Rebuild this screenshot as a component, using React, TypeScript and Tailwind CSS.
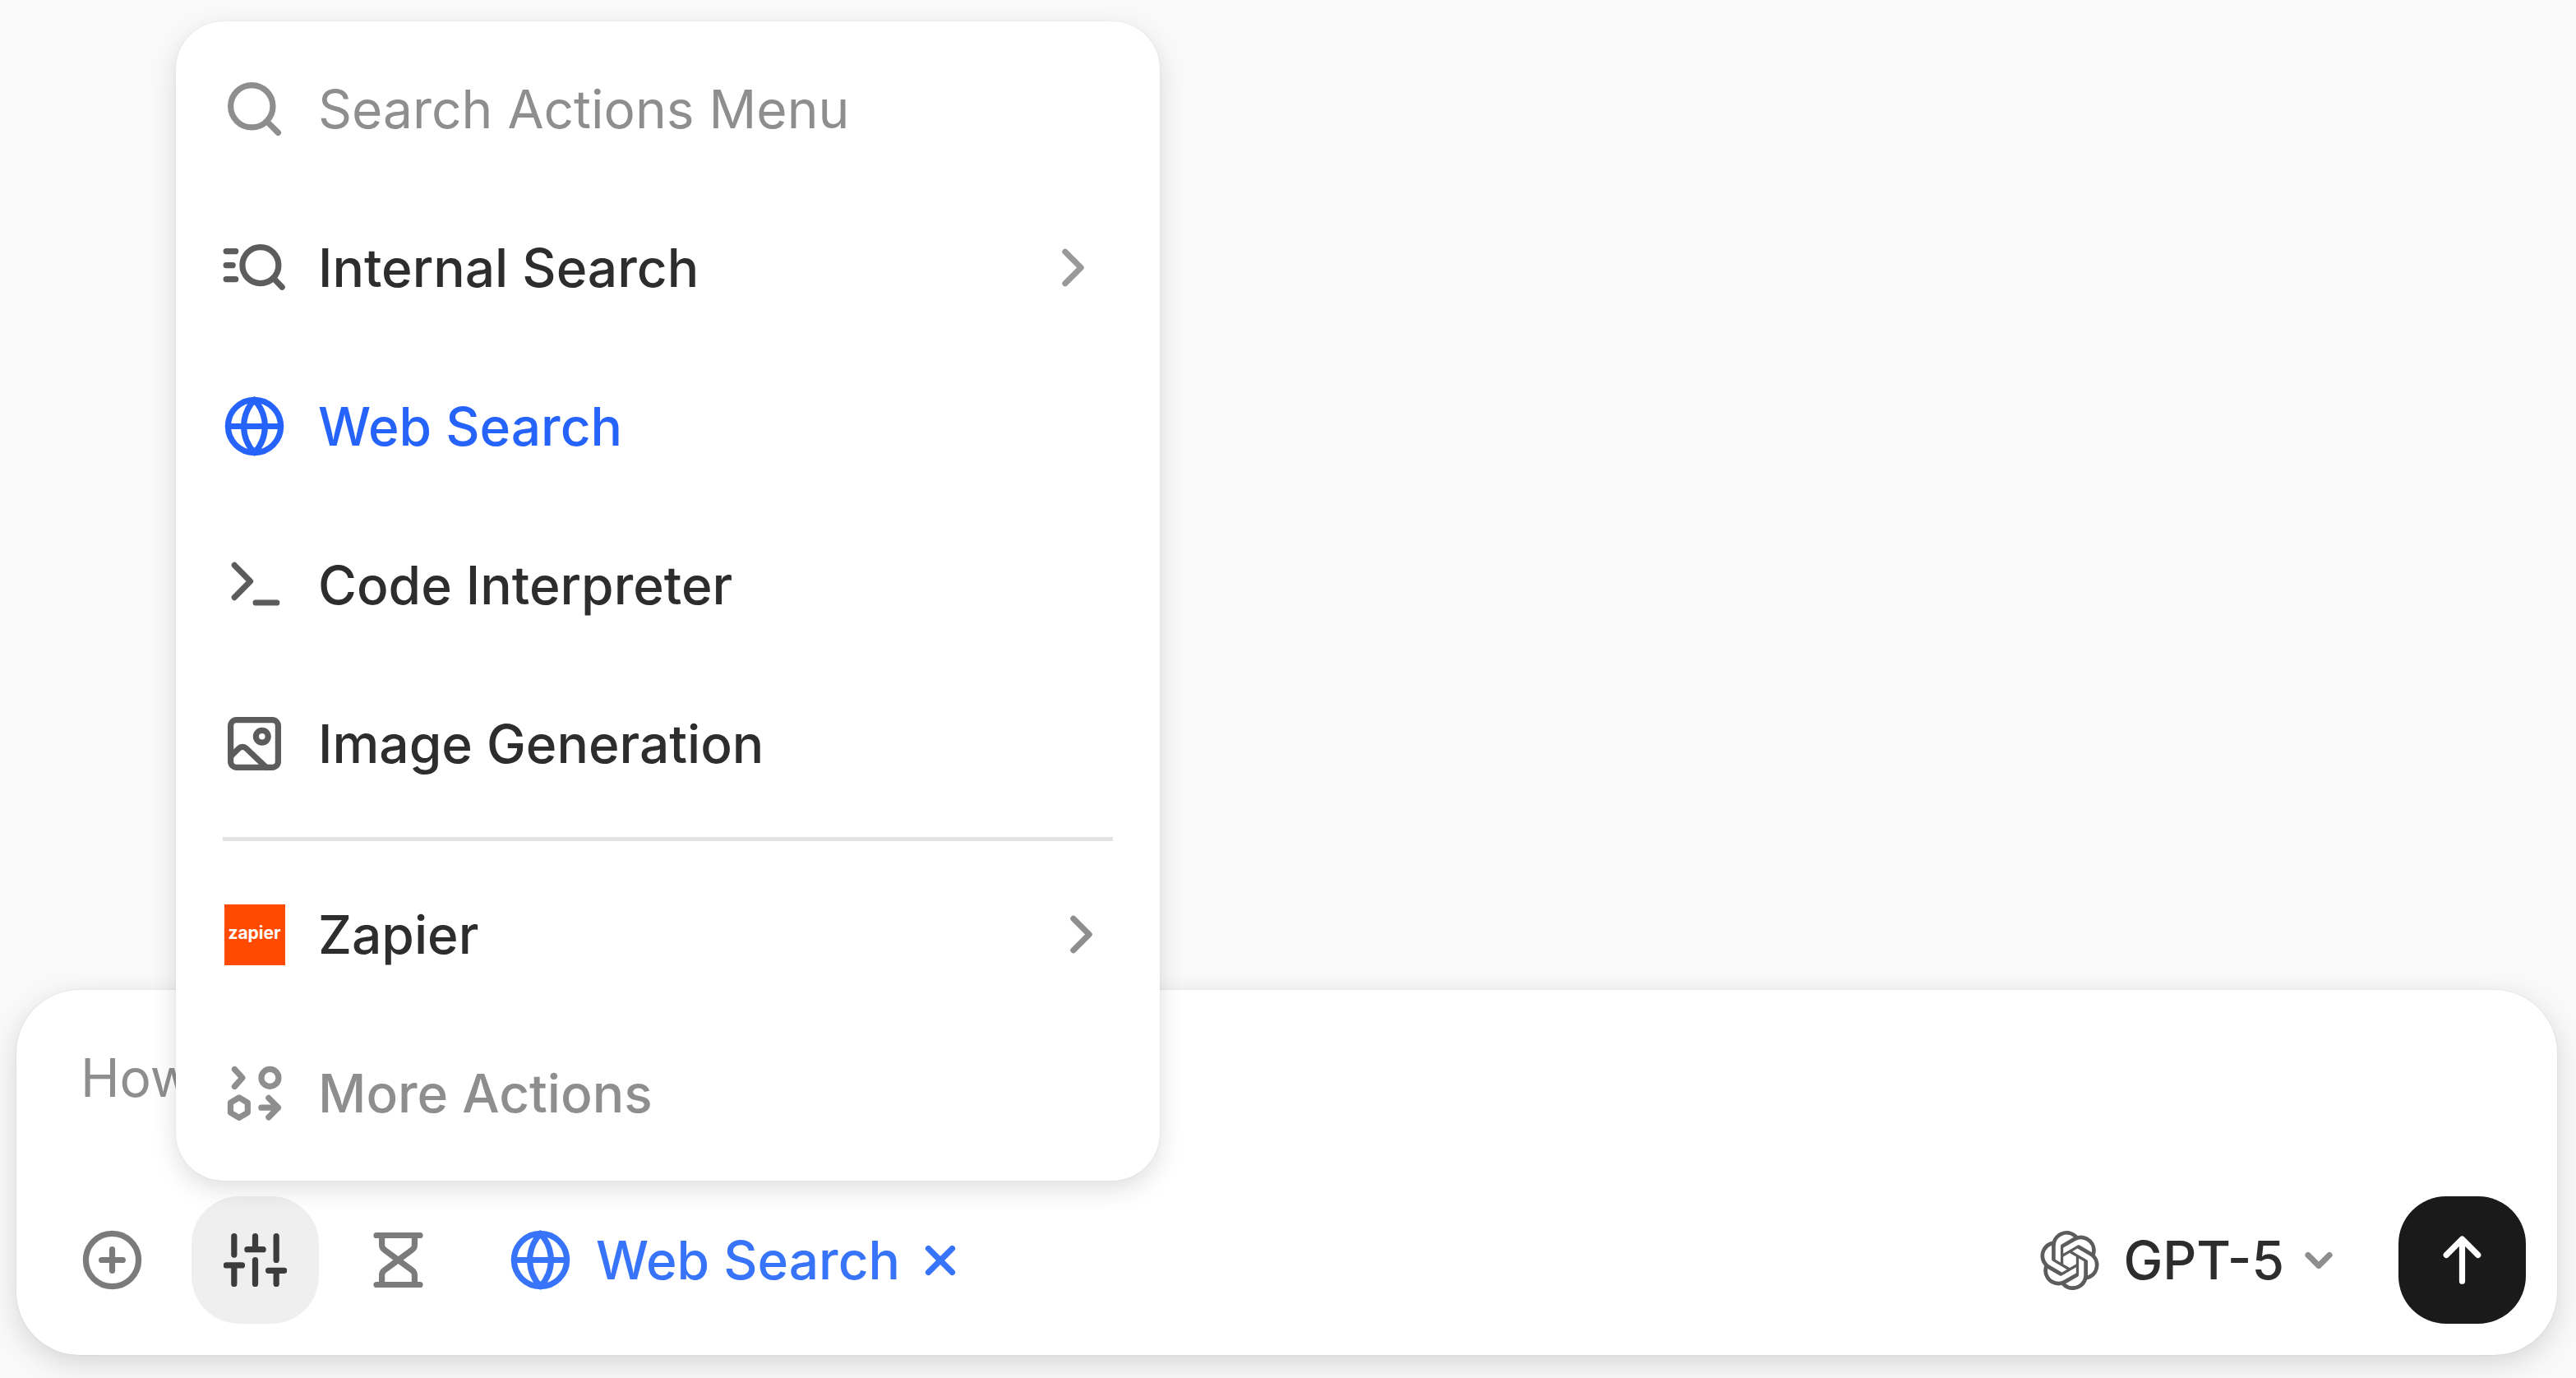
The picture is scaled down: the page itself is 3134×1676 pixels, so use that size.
import React from "react";
import { ChevronDown, ChevronRight, CirclePlus, Globe, Search, X } from "lucide-react";
import { SiOpenai } from "react-icons/si";

type IconProps = { className?: string };

const ICON = "size-[77px] shrink-0";

function Stroke({ className, children }: IconProps & { children: React.ReactNode }) {
  return (
    <svg
      viewBox="0 0 24 24"
      fill="none"
      stroke="currentColor"
      strokeWidth={2.25}
      strokeLinecap="round"
      strokeLinejoin="round"
      aria-hidden="true"
      className={`size-[77px] shrink-0 ${className ?? ""}`}
    >
      {children}
    </svg>
  );
}

function MenuSearchIcon({ className }: IconProps) {
  return (
    <Stroke className={className}>
      <path d="M1.3 5.8h3.6M1.3 11.1h2.5M1.3 16.4h3.6M19.2 16l3.3 3.4" />
      <circle cx="14.3" cy="11.1" r="6.85" />
    </Stroke>
  );
}

function PromptIcon({ className }: IconProps) {
  return (
    <Stroke className={className}>
      <path d="M4.45 4.5l6 6.1-6 6.1M12.5 18.7h8" />
    </Stroke>
  );
}

function PictureIcon({ className }: IconProps) {
  return (
    <Stroke className={className}>
      <rect x="3" y="3" width="18" height="18" rx="2.2" />
      <circle cx="14.9" cy="9.3" r="2.3" />
      <path d="M3 16.8l3.1-3a2 2 0 0 1 2.8 0L16.5 21" />
    </Stroke>
  );
}

function ActionsIcon({ className }: IconProps) {
  return (
    <Stroke className={className}>
      <path d="M4.5 2.95l2.95 3.25-2.95 3.3" />
      <circle cx="17.9" cy="6.2" r="3.26" />
      <path d="M6.2 13.7l3.25 1.9v3.8l-3.25 1.9-3.25-1.9v-3.8z" />
      <path d="M14.6 17.5h6.4M17.4 13.85l3.6 3.65-3.6 3.65" />
    </Stroke>
  );
}

function SlidersIcon({ className }: IconProps) {
  return (
    <Stroke className={className}>
      <path d="M4 21v-7M4 10V3M12 21v-9M12 8V3M20 21v-5M20 12V3M1 14h6M9 8h6M17 16h6" />
    </Stroke>
  );
}

function HourglassIcon({ className }: IconProps) {
  return (
    <Stroke className={className}>
      <path d="M3.75 2.65h16.5M3.75 21.35h16.5" />
      <path d="M5.8 2.65V6.3c0 .75.37 1.4.97 1.85L12 12l5.23-3.85c.6-.45.97-1.1.97-1.85V2.65" />
      <path d="M5.8 21.35V17.7c0-.75.37-1.4.97-1.85L12 12l5.23 3.85c.6.45.97 1.1.97 1.85v3.65" />
    </Stroke>
  );
}

function SendIcon({ className }: IconProps) {
  return (
    <Stroke className={className}>
      <path d="M12 20V4.2M6 10.1l6-6 6 6" />
    </Stroke>
  );
}

function ZapierLogo() {
  return (
    <span className="flex size-[77px] shrink-0 items-center justify-center">
      <span className="flex size-[74px] items-center justify-center bg-[#ff4a00] pb-1 text-[21px] leading-none font-bold text-white">
        zapier
      </span>
    </span>
  );
}

type ItemProps = {
  icon: React.ReactNode;
  label: string;
  tone?: string;
  trailing?: React.ReactNode;
};

function MenuItem({ icon, label, tone = "text-[#2d2d2d]", trailing }: ItemProps) {
  return (
    <li>
      <button
        type="button"
        className={`flex h-[193px] w-full items-center gap-[39px] text-left text-[64px] leading-[96px] font-[550] whitespace-nowrap ${tone}`}
      >
        {icon}
        <span className="grow">{label}</span>
        {trailing}
      </button>
    </li>
  );
}

function ActionsMenu() {
  return (
    <div className="absolute bottom-full -left-[19px] z-10 mb-[19px] w-[1197px] rounded-[58px] bg-white px-[57px] py-[10px] shadow-[0_10px_30px_rgba(0,0,0,0.13),0_0_2px_rgba(0,0,0,0.08)]">
      <label className="flex h-[193px] items-center gap-[39px] text-[#8e8e8e]">
        <Search className={ICON} strokeWidth={2.25} />
        <input
          type="text"
          aria-label="Search Actions Menu"
          placeholder="Search Actions Menu"
          className="h-24 min-w-0 grow bg-transparent text-[64px] leading-[96px] outline-none placeholder:text-[#8e8e8e]"
        />
      </label>
      <ul>
        <MenuItem
          icon={<MenuSearchIcon className="text-[#5c5c5c]" />}
          label="Internal Search"
          trailing={<ChevronRight className="mr-[10px] size-[77px] shrink-0 text-[#999999]" strokeWidth={2.25} />}
        />
        <MenuItem icon={<Globe className={ICON} strokeWidth={2.25} />} label="Web Search" tone="text-[#2563fb]" />
        <MenuItem icon={<PromptIcon className="text-[#5c5c5c]" />} label="Code Interpreter" />
        <MenuItem icon={<PictureIcon className="text-[#5c5c5c]" />} label="Image Generation" />
      </ul>
      <hr className="my-[17px] h-[5px] border-0 bg-[#e3e3e3]" />
      <ul>
        <MenuItem
          icon={<ZapierLogo />}
          label="Zapier"
          trailing={<ChevronRight className="size-[77px] shrink-0 text-[#8e8e8e]" strokeWidth={2.25} />}
        />
        <MenuItem icon={<ActionsIcon />} label="More Actions" tone="text-[#8e8e8e]" />
      </ul>
    </div>
  );
}

const SQUARE = "flex size-[155px] shrink-0 items-center justify-center rounded-[58px]";

export default function App() {
  return (
    <main className="flex min-h-screen flex-col justify-end bg-[#f9f9f9] pr-[23px] pb-7 pl-5 font-['Inter',sans-serif]">
      <form className="rounded-[77px] bg-white pt-[59px] pr-[38px] pb-[38px] pl-[39px] shadow-[0_10px_34px_rgba(0,0,0,0.14),0_0_2px_rgba(0,0,0,0.1)]">
        <textarea
          aria-label="Message"
          placeholder="How"
          rows={1}
          className="block h-24 w-full resize-none px-[39px] text-[64px] leading-[96px] outline-none placeholder:text-[#8e8e8e]"
        />
        <div className="mt-24 flex items-center gap-[19px]">
          <button type="button" aria-label="Attach" className={`${SQUARE} text-[#7b7b7b]`}>
            <CirclePlus className={ICON} strokeWidth={2.25} />
          </button>
          <div className="relative">
            <button
              type="button"
              aria-label="Actions"
              aria-expanded="true"
              className={`${SQUARE} bg-[#efefef] text-[#3c3c3c]`}
            >
              <SlidersIcon />
            </button>
            <ActionsMenu />
          </div>
          <button type="button" aria-label="Deep research" className={`${SQUARE} text-[#7b7b7b]`}>
            <HourglassIcon />
          </button>
          <button
            type="button"
            className="flex h-[155px] items-center px-[38px] text-[64px] leading-[96px] font-[550] whitespace-nowrap text-[#3874fa]"
          >
            <Globe className={ICON} strokeWidth={2.25} />
            <span className="ml-[29px]">Web Search</span>
            <X className="ml-5 size-[58px] shrink-0" strokeWidth={3} />
          </button>
          <div className="ml-auto flex items-center gap-8">
            <button
              type="button"
              aria-haspopup="menu"
              className="flex h-[155px] items-center px-[39px] text-[64px] leading-[96px] font-[550] whitespace-nowrap text-[#2d2d2d]"
            >
              <SiOpenai className="size-[72px] shrink-0 text-[#5c5c5c]" />
              <span className="ml-[29px]">GPT-5</span>
              <ChevronDown className="ml-4 size-[52px] shrink-0 text-[#8e8e8e]" strokeWidth={3.3} />
            </button>
            <button type="submit" aria-label="Send" className={`${SQUARE} bg-[#1a1a1a] text-white`}>
              <SendIcon />
            </button>
          </div>
        </div>
      </form>
    </main>
  );
}
